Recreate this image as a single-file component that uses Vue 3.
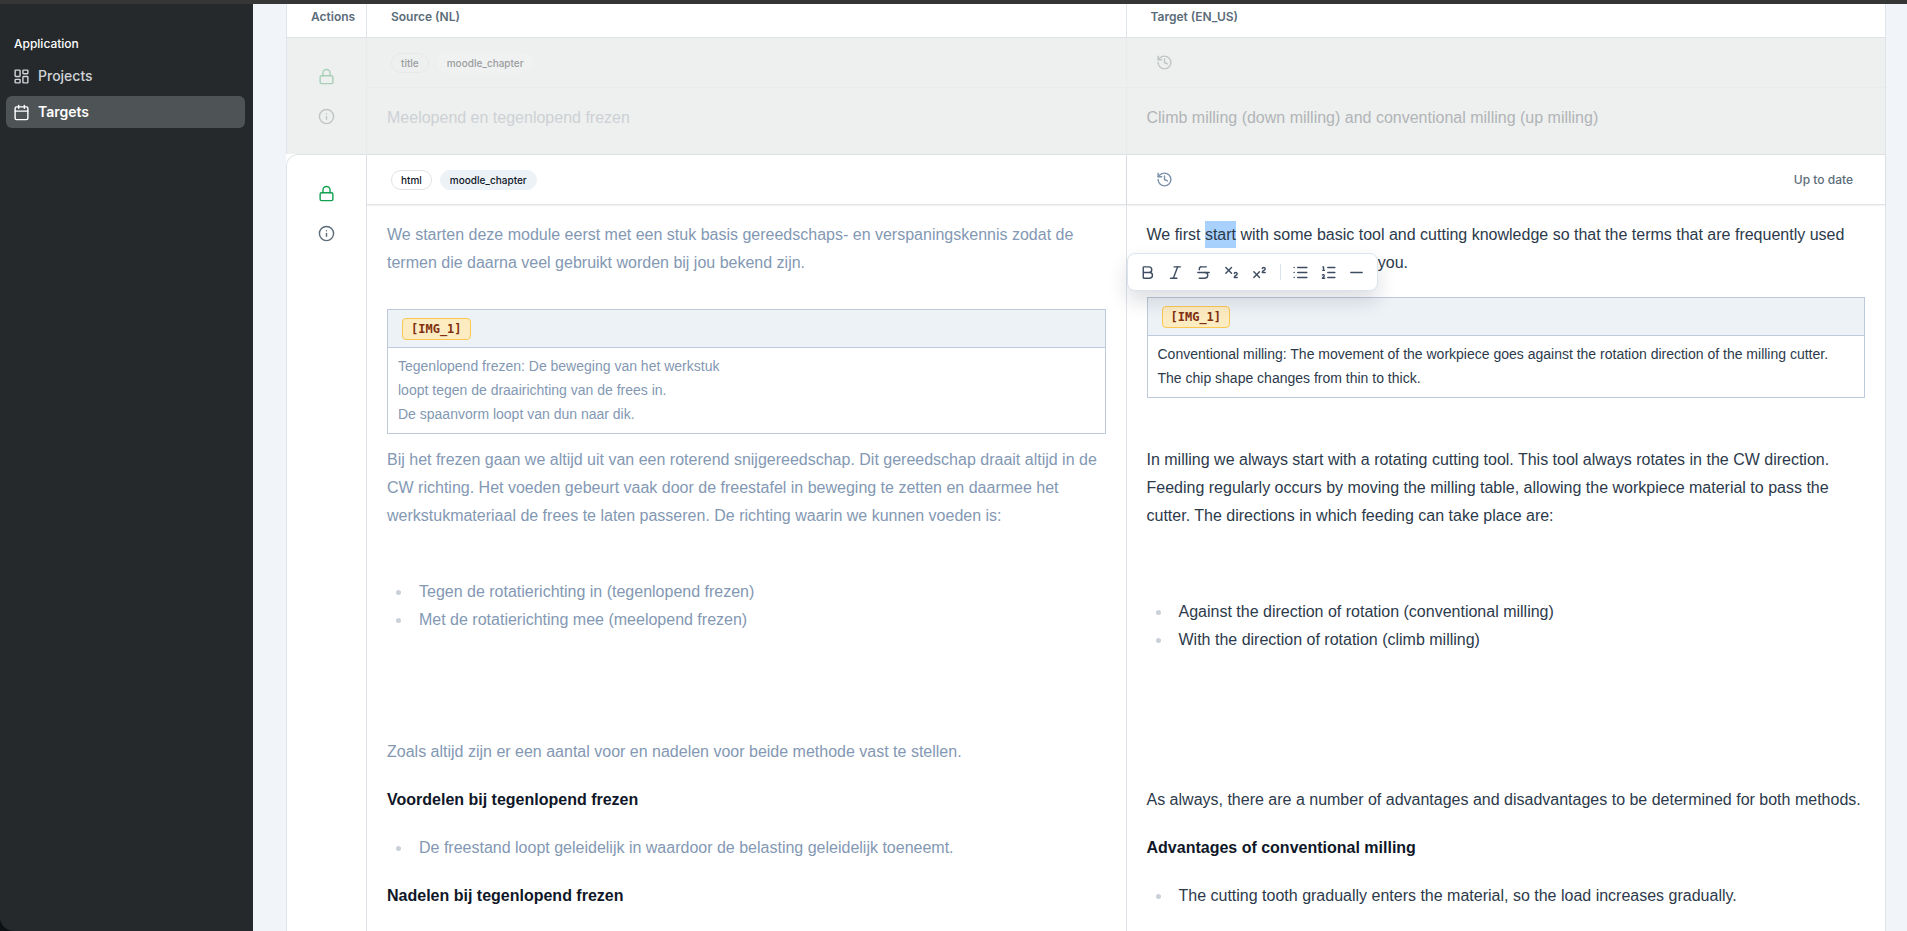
<script setup>
import { ref } from 'vue'

// Icon paths on a 24 x 24 grid, drawn as strokes
const icons = {
  dashboard: ['M4 3h5a1 1 0 0 1 1 1v7a1 1 0 0 1-1 1H4a1 1 0 0 1-1-1V4a1 1 0 0 1 1-1z', 'M15 3h5a1 1 0 0 1 1 1v3a1 1 0 0 1-1 1h-5a1 1 0 0 1-1-1V4a1 1 0 0 1 1-1z', 'M15 12h5a1 1 0 0 1 1 1v7a1 1 0 0 1-1 1h-5a1 1 0 0 1-1-1v-7a1 1 0 0 1 1-1z', 'M4 16h5a1 1 0 0 1 1 1v3a1 1 0 0 1-1 1H4a1 1 0 0 1-1-1v-3a1 1 0 0 1 1-1z'],
  calendar: ['M8 2v4', 'M16 2v4', 'M5 4h14a2 2 0 0 1 2 2v14a2 2 0 0 1-2 2H5a2 2 0 0 1-2-2V6a2 2 0 0 1 2-2z', 'M3 10h18'],
  lock: ['M5 11h14a2 2 0 0 1 2 2v7a2 2 0 0 1-2 2H5a2 2 0 0 1-2-2v-7a2 2 0 0 1 2-2z', 'M7 11V7a5 5 0 0 1 10 0v4'],
  info: ['M12 2a10 10 0 1 0 0 20a10 10 0 1 0 0-20z', 'M12 16v-4', 'M12 8h.01'],
  history: ['M3 12a9 9 0 1 0 9-9 9.75 9.75 0 0 0-6.74 2.74L3 8', 'M3 3v5h5', 'M12 7v5l4 2'],
  bold: ['M6 12h9a4 4 0 0 1 0 8H7a1 1 0 0 1-1-1V5a1 1 0 0 1 1-1h7a4 4 0 0 1 0 8'],
  italic: ['M19 4h-9', 'M14 20H5', 'M15 4L9 20'],
  strike: ['M16 4H9a3 3 0 0 0-2.83 4', 'M14 12a4 4 0 0 1 0 8H6', 'M4 12h16'],
  sub: ['M4 5l8 8', 'M12 5l-8 8', 'M20 19h-4c0-1.5.44-2 1.5-2.5S20 15.33 20 14c0-.47-.17-.93-.48-1.29a2.11 2.11 0 0 0-2.62-.44c-.42.24-.74.62-.9 1.07'],
  sup: ['M4 19l8-8', 'M12 19l-8-8', 'M20 12h-4c0-1.5.44-2 1.5-2.5S20 8.33 20 7c0-.47-.17-.93-.48-1.29a2.11 2.11 0 0 0-2.62-.44c-.42.24-.74.62-.9 1.07'],
  bullets: ['M8 5h13', 'M8 12h13', 'M8 19h13', 'M3 5h.01', 'M3 12h.01', 'M3 19h.01'],
  numbers: ['M11 5h10', 'M11 12h10', 'M11 19h10', 'M4 4h1v5', 'M4 9h2', 'M6.5 20H3.4c0-1 2.6-1.9 2.6-3.5a1.5 1.5 0 0 0-2.6-1'],
  minus: ['M4 12h16'],
}

const nav = [
  { label: 'Projects', icon: 'dashboard' },
  { label: 'Targets', icon: 'calendar' },
]
const activeNav = ref('Targets')

const inlineTools = [
  { icon: 'bold', label: 'Bold' },
  { icon: 'italic', label: 'Italic' },
  { icon: 'strike', label: 'Strikethrough' },
  { icon: 'sub', label: 'Subscript' },
  { icon: 'sup', label: 'Superscript' },
]
const blockTools = [
  { icon: 'bullets', label: 'Bullet list' },
  { icon: 'numbers', label: 'Numbered list' },
  { icon: 'minus', label: 'Divider' },
]
</script>

<template>
  <div class="app">
    <div class="strip"></div>
    <div class="shell">
      <aside class="sidebar">
        <div class="group-label">Application</div>
        <nav class="nav">
          <a
            v-for="n in nav" :key="n.label" href="#"
            :class="['nav-item', { on: n.label === activeNav }]"
            @click.prevent="activeNav = n.label"
          >
            <svg class="icon" viewBox="0 0 24 24"><path v-for="d in icons[n.icon]" :key="d" :d="d"/></svg>
            <span>{{ n.label }}</span>
          </a>
        </nav>
      </aside>

      <main class="main">
        <table class="segments">
          <colgroup><col class="col-actions"><col><col></colgroup>
          <thead>
            <tr>
              <th scope="col">Actions</th>
              <th scope="col">Source (NL)</th>
              <th scope="col">Target (EN_US)</th>
            </tr>
          </thead>
          <tbody>
            <!-- locked title segment -->
            <tr class="muted">
              <td>
                <div class="actions">
                  <button class="icon-btn lock" aria-label="Lock"><svg class="icon" viewBox="0 0 24 24"><path v-for="d in icons.lock" :key="d" :d="d"/></svg></button>
                  <button class="icon-btn" aria-label="Info"><svg class="icon" viewBox="0 0 24 24"><path v-for="d in icons.info" :key="d" :d="d"/></svg></button>
                </div>
              </td>
              <td>
                <div class="bar"><span class="badge outline">title</span><span class="badge">moodle_chapter</span></div>
                <div class="prose source"><p>Meelopend en tegenlopend frezen</p></div>
              </td>
              <td>
                <div class="bar">
                  <button class="history" aria-label="History"><svg class="icon" viewBox="0 0 24 24"><path v-for="d in icons.history" :key="d" :d="d"/></svg></button>
                </div>
                <div class="prose"><p>Climb milling (down milling) and conventional milling (up milling)</p></div>
              </td>
            </tr>

            <!-- html segment being edited -->
            <tr class="current">
              <td>
                <div class="actions">
                  <button class="icon-btn lock" aria-label="Lock"><svg class="icon" viewBox="0 0 24 24"><path v-for="d in icons.lock" :key="d" :d="d"/></svg></button>
                  <button class="icon-btn" aria-label="Info"><svg class="icon" viewBox="0 0 24 24"><path v-for="d in icons.info" :key="d" :d="d"/></svg></button>
                </div>
              </td>
              <td>
                <div class="bar"><span class="badge outline">html</span><span class="badge">moodle_chapter</span></div>
                <div class="prose source">
                  <p>We starten deze module eerst met een stuk basis gereedschaps- en verspaningskennis zodat de<br>termen die daarna veel gebruikt worden bij jou bekend zijn.</p>
                  <table class="figure snug">
                    <thead><tr><th><span class="token">[IMG_1]</span></th></tr></thead>
                    <tbody><tr><td>Tegenlopend frezen: De beweging van het werkstuk<br>loopt tegen de draairichting van de frees in.<br>De spaanvorm loopt van dun naar dik.</td></tr></tbody>
                  </table>
                  <p>Bij het frezen gaan we altijd uit van een roterend snijgereedschap. Dit gereedschap draait altijd in de<br>CW richting. Het voeden gebeurt vaak door de freestafel in beweging te zetten en daarmee het<br>werkstukmateriaal de frees te laten passeren. De richting waarin we kunnen voeden is:</p>
                  <p class="blank"></p>
                  <ul>
                    <li>Tegen de rotatierichting in (tegenlopend frezen)</li>
                    <li>Met de rotatierichting mee (meelopend frezen)</li>
                  </ul>
                  <p v-for="i in 3" :key="i" class="blank"></p>
                  <p>Zoals altijd zijn er een aantal voor en nadelen voor beide methode vast te stellen.</p>
                  <h4>Voordelen bij tegenlopend frezen</h4>
                  <ul><li>De freestand loopt geleidelijk in waardoor de belasting geleidelijk toeneemt.</li></ul>
                  <h4>Nadelen bij tegenlopend frezen</h4>
                </div>
              </td>
              <td>
                <div class="bar">
                  <button class="history" aria-label="History"><svg class="icon" viewBox="0 0 24 24"><path v-for="d in icons.history" :key="d" :d="d"/></svg></button>
                  <span class="status">Up to date</span>
                </div>
                <div class="prose editor">
                  <div class="bubble" role="toolbar" aria-label="Formatting">
                    <button v-for="t in inlineTools" :key="t.icon" :aria-label="t.label">
                      <svg class="icon" viewBox="0 0 24 24"><path v-for="d in icons[t.icon]" :key="d" :d="d"/></svg>
                    </button>
                    <span class="sep"></span>
                    <button v-for="t in blockTools" :key="t.icon" :aria-label="t.label">
                      <svg class="icon" viewBox="0 0 24 24"><path v-for="d in icons[t.icon]" :key="d" :d="d"/></svg>
                    </button>
                  </div>
                  <p>We first <mark>start</mark> with some basic tool and cutting knowledge so that the terms that are frequently used<br>in the following, are all known to you.</p>
                  <table class="figure">
                    <thead><tr><th><span class="token">[IMG_1]</span></th></tr></thead>
                    <tbody><tr><td>Conventional milling: The movement of the workpiece goes against the rotation direction of the milling cutter.<br>The chip shape changes from thin to thick.</td></tr></tbody>
                  </table>
                  <p class="blank"></p>
                  <p>In milling we always start with a rotating cutting tool. This tool always rotates in the CW direction.<br>Feeding regularly occurs by moving the milling table, allowing the workpiece material to pass the<br>cutter. The directions in which feeding can take place are:</p>
                  <p class="blank"></p>
                  <ul class="loose">
                    <li>Against the direction of rotation (conventional milling)</li>
                    <li>With the direction of rotation (climb milling)</li>
                  </ul>
                  <p v-for="i in 4" :key="i" class="blank"></p>
                  <p>As always, there are a number of advantages and disadvantages to be determined for both methods.</p>
                  <h4>Advantages of conventional milling</h4>
                  <ul><li>The cutting tooth gradually enters the material, so the load increases gradually.</li></ul>
                </div>
              </td>
            </tr>
          </tbody>
        </table>
      </main>
    </div>
  </div>
</template>

<style>
body { margin: 0; }
</style>

<style scoped>
.app {
  height: 100vh; overflow: hidden;
  display: flex; flex-direction: column;
  background: #0c1214; color: #2c3a4b;
  font-family: Inter, 'Liberation Sans', sans-serif; font-size: 12px; line-height: 20px;
}
.strip { flex: none; height: 4px; background: #363636; }
.shell { flex: 1; min-height: 0; display: flex; }
button { border: none; background: none; padding: 0; color: inherit; font: inherit; cursor: pointer; }
.icon {
  display: block; flex: none; width: 17px; height: 17px;
  fill: none; stroke: currentColor; stroke-width: 2; stroke-linecap: round; stroke-linejoin: round;
}

/* sidebar */
.sidebar {
  flex: none; width: 253px; box-sizing: border-box; padding: 24px 8px 8px 6px;
  background: #25292c; color: #d0d4d8; border-bottom-left-radius: 14px;
}
.group-label { padding: 0 8px; line-height: 32px; font-weight: 500; color: #fff; }
.nav { display: flex; flex-direction: column; gap: 4px; }
.nav-item {
  display: flex; align-items: center; gap: 8px;
  height: 32px; padding: 0 7px; border-radius: 6px;
  color: inherit; text-decoration: none; font-size: 14px; font-weight: 500;
}
.nav-item.on { background: #4e5355; color: #fff; font-weight: 600; }

/* segment table */
.main { flex: 1; min-width: 0; overflow: hidden; padding: 0 21px 0 33px; background: #f1f5f9; }
.segments {
  width: 100%; table-layout: fixed; border-spacing: 0; background: #fff;
}
.col-actions { width: 81px; }
.segments > thead th {
  padding: 3px 0 10px 24px; border-right: 1px solid #dfe5ea;
  text-align: left; font-weight: 600; color: #5b6c79;
}
.segments > tbody > tr > td { padding: 0; vertical-align: top; border-top: 1px solid #dfe3e6; border-right: 1px solid #dfe3e8; }
.segments > thead th:first-child, .segments > tbody > tr > td:first-child { border-left: 1px solid #dfe5ea; }
.actions { display: flex; flex-direction: column; align-items: center; gap: 8px; padding-top: 22px; color: #5b6c79; }
.icon-btn { width: 32px; height: 32px; display: flex; align-items: center; justify-content: center; }
.icon-btn.lock { color: #12a150; }
.bar {
  display: flex; align-items: center; gap: 8px;
  height: 49px; padding: 0 32px 0 24px; border-bottom: 1px solid #dfe3e8;
}
.badge {
  padding: 0 9px; border: 1px solid #edf2f7; border-radius: 10px; background: #edf2f7;
  color: #0f1728; font-size: 10px; line-height: 18px; font-weight: 500;
}
.badge.outline { background: none; border-color: #dfe3e6; }
.history { width: 28px; height: 28px; display: flex; align-items: center; justify-content: center; color: #7d91ac; }
.status { margin-left: auto; font-weight: 500; color: #5b6c79; }

.muted > td { background: #eef0ef; }
.muted > td:not(:last-child) { border-right-color: #e8ebeb !important; }
.muted .bar { border-bottom-color: #e9ecec; }
.muted .badge { color: #9a9d9f; background: #f0f2f1; border-color: #f0f2f1; }
.muted .badge.outline { background: none; border-color: #e6e9e9; }
.muted .icon-btn, .muted .history { color: #c0c5c6; }
.muted .icon-btn.lock { color: #a9cfb8; }
.muted .prose { color: #b1b4b7; padding-bottom: 22px; }
.muted .source { color: #cdd0d5; }

.current > td:first-child { border-top-left-radius: 12px; }
.current .bar { box-shadow: 0 1px 2px rgba(15, 23, 42, .06); }

/* rich text */
.prose {
  position: relative; padding: 16px 20px 40px;
  font-family: 'Liberation Sans', Arial, sans-serif; font-size: 16px; line-height: 28px;
}
.source { color: #8398b3; }
.prose p, .prose h4, .prose ul { margin: 20px 0 0; }
.prose > p:first-child, .bubble + p { margin-top: 0; }
.prose h4 { font-size: 16px; font-weight: 700; color: #0f1728; }
.prose .blank { height: 28px; }
.prose .blank + .blank, .prose .blank + p, .prose .blank + ul { margin-top: 0; }
.prose .blank + .loose { margin-top: 20px; }
.prose ul { list-style: none; padding: 0; }
.prose li { display: flex; align-items: center; }
.prose li::before { content: ''; width: 5px; height: 5px; margin: 0 18px 0 9px; border-radius: 50%; background: #cbd1d9; }
mark { background: #a8d2fd; color: inherit; padding: 5px 0; }

.figure {
  width: 100%; margin-top: 20px; border: 1px solid #bccadb; border-spacing: 0;
  font-size: 14px; line-height: 24px;
}
.figure th { height: 37px; padding: 0 14px; text-align: left; background: #edf2f7; border-bottom: 1px solid #bccadb; }
.figure td { padding: 6px 10px 7px; }
.figure.snug { margin-top: 32px; }
.figure.snug + p { margin-top: 12px; }
.token {
  display: block; width: max-content; padding: 0 8px;
  border: 1px solid #fbc750; border-radius: 4px; background: #fdecc2; color: #80300f;
  font: 700 12px/20px 'DejaVu Sans Mono', monospace;
}

/* floating format bar */
.bubble {
  position: absolute; left: 0; top: 48px; z-index: 2;
  display: flex; align-items: center; padding: 6px;
  background: #fff; border: 1px solid #dbe4ee; border-radius: 8px; color: #3d4c60;
  box-shadow: 0 10px 20px rgba(15, 23, 42, .14);
}
.bubble button { width: 28px; height: 24px; display: flex; align-items: center; justify-content: center; }
.bubble .sep { width: 1px; height: 16px; margin: 0 6px; background: #dbe4ee; }
</style>
